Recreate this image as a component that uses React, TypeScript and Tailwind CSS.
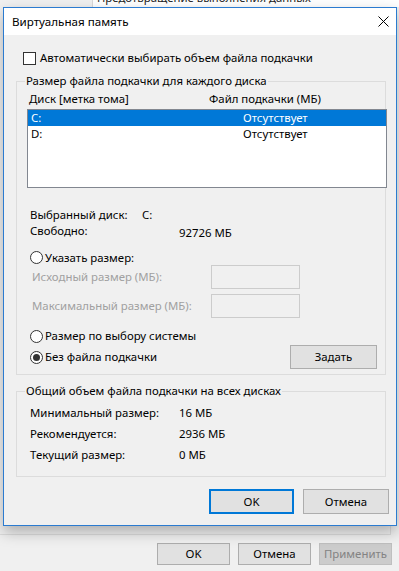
import * as React from "react";

const FONT = "font-['Noto_Sans',sans-serif]";

function Radio({ checked, label }: { checked?: boolean; label: string }) {
  return (
    <div className="flex items-center gap-[2px]">
      <span className="flex h-[13px] w-[13px] items-center justify-center rounded-full border border-[#333333] bg-white">
        {checked ? <span className="h-[7px] w-[7px] rounded-full bg-[#333333]" /> : null}
      </span>
      <span>{label}</span>
    </div>
  );
}

function GroupBox({
  label,
  className,
  children,
}: {
  label: string;
  className?: string;
  children: React.ReactNode;
}) {
  return (
    <div className={`relative border border-[#dcdcdc] ${className ?? ""}`}>
      <span className="absolute left-[8px] top-[-9px] bg-[#f0f0f0] px-[1px] leading-[16px]">{label}</span>
      {children}
    </div>
  );
}

function InfoRow({ label, value, col, valueClass }: { label: string; value: string; col: string; valueClass?: string }) {
  return (
    <div className="flex h-[16px] items-center leading-[16px]">
      <span className={col}>{label}</span>
      <span className={valueClass}>{value}</span>
    </div>
  );
}

export default function App() {
  return (
    <div className={`relative h-[571px] w-[399px] overflow-hidden bg-[#f0f0f0] text-[11.4px] text-black ${FONT}`}>
      {/* окно свойств системы позади */}
      <div className="flex h-[7px]">
        <div className="w-[92px]" />
        <div className="flex-1 overflow-hidden border-l border-[#d9d9d9] bg-white pl-[4px]">
          <div className="mt-[-10px] leading-[16px] text-[#222]">Предотвращение выполнения данных</div>
        </div>
      </div>
      <div className="h-[528px] w-[391px] border-b border-r border-[#dcdcdc]" />
      <div className="mt-[8px] flex justify-end gap-[8px] pr-[7px]">
        <button className="h-[22px] w-[73px] border border-[#adadad] bg-[#e1e1e1]">OK</button>
        <button className="h-[22px] w-[73px] border border-[#adadad] bg-[#e1e1e1]">Отмена</button>
        <button className="h-[22px] w-[73px] border border-[#bfbfbf] bg-[#cccccc] text-[#838383]">Применить</button>
      </div>

      {/* диалог */}
      <div className="absolute left-[3px] top-[7px] flex h-[519px] w-[394px] flex-col border border-[#2b7bd0] bg-[#f0f0f0] shadow-[0_6px_14px_rgba(0,0,0,0.28)]">
        <div className="flex h-[27px] shrink-0 items-center justify-between bg-white pl-[8px] pr-[7px]">
          <span className="text-[11.6px] leading-[16px]">Виртуальная память</span>
          <svg width="11" height="11" viewBox="0 0 11 11">
            <path d="M0.5 0.5 L10.5 10.5 M10.5 0.5 L0.5 10.5" stroke="#000" strokeWidth="1" />
          </svg>
        </div>

        <div className="flex flex-1 flex-col pl-[12px] pr-[10px]">
          <div className="ml-[7px] mt-[16px] flex h-[14px] items-center gap-[4px] leading-[16px]">
            <span className="h-[13px] w-[13px] border border-[#333333] bg-white" />
            <span>Автоматически выбирать объем файла подкачки</span>
          </div>

          <GroupBox label="Размер файла подкачки для каждого диска" className="mt-[16px] h-[294px]">
            <div className="ml-[12px] mt-[9px] flex h-[16px] items-center leading-[16px]">
              <span className="w-[180px]">Диск [метка тома]</span>
              <span>Файл подкачки (МБ)</span>
            </div>
            <div className="ml-[10px] mt-[2px] h-[79px] w-[360px] border border-[#828790] bg-white">
              <div className="flex h-[16px] items-center bg-[#0078d7] pl-[3px] leading-[16px] text-white">
                <span className="w-[212px]">C:</span>
                <span>Отсутствует</span>
              </div>
              <div className="flex h-[16px] items-center pl-[3px] leading-[16px]">
                <span className="w-[212px]">D:</span>
                <span>Отсутствует</span>
              </div>
            </div>

            <div className="ml-[13px] mt-[19px] flex flex-col">
              <InfoRow label="Выбранный диск:" value="C:" col="w-[112px]" />
              <div className="flex h-[16px] leading-[16px]">
                <span className="w-[149px]">Свободно:</span>
                <span className="mt-[2px]">92726 МБ</span>
              </div>
            </div>

            <div className="ml-[13px] mt-[11px] flex h-[15px] items-center leading-[16px]">
              <Radio label="Указать размер:" />
            </div>
            <div className="ml-[15px] flex h-[24px] items-center text-[#a0a0a0]">
              <span className="w-[179px]">Исходный размер (МБ):</span>
              <span className="h-[24px] w-[89px] border border-[#cccccc] bg-[#f0f0f0]" />
            </div>
            <div className="ml-[15px] mt-[5px] flex h-[24px] items-center text-[#a0a0a0]">
              <span className="w-[179px]">Максимальный размер (МБ):</span>
              <span className="h-[24px] w-[89px] border border-[#cccccc] bg-[#f0f0f0]" />
            </div>
            <div className="ml-[13px] mt-[10px] flex h-[16px] items-center leading-[16px]">
              <Radio label="Размер по выбору системы" />
            </div>
            <div className="ml-[13px] mr-[8px] mt-[1px] flex h-[24px] items-center justify-between leading-[16px]">
              <Radio checked label="Без файла подкачки" />
              <button className="h-[24px] w-[87px] border border-[#adadad] bg-[#e1e1e1]">Задать</button>
            </div>
          </GroupBox>

          <GroupBox label="Общий объем файла подкачки на всех дисках" className="mt-[16px] h-[86px]">
            <div className="ml-[13px] mt-[13px] flex flex-col gap-[5px]">
              <InfoRow label="Минимальный размер:" value="16 МБ" col="w-[149px]" />
              <InfoRow label="Рекомендуется:" value="2936 МБ" col="w-[149px]" />
              <InfoRow label="Текущий размер:" value="0 МБ" col="w-[149px]" />
            </div>
          </GroupBox>

          <div className="-mr-[3px] mt-[12px] flex justify-end gap-[9px]">
            <button className="h-[25px] w-[85px] border-2 border-[#0078d7] bg-[#e1e1e1]">OK</button>
            <button className="h-[25px] w-[86px] border border-[#adadad] bg-[#e1e1e1]">Отмена</button>
          </div>
        </div>
      </div>
    </div>
  );
}
